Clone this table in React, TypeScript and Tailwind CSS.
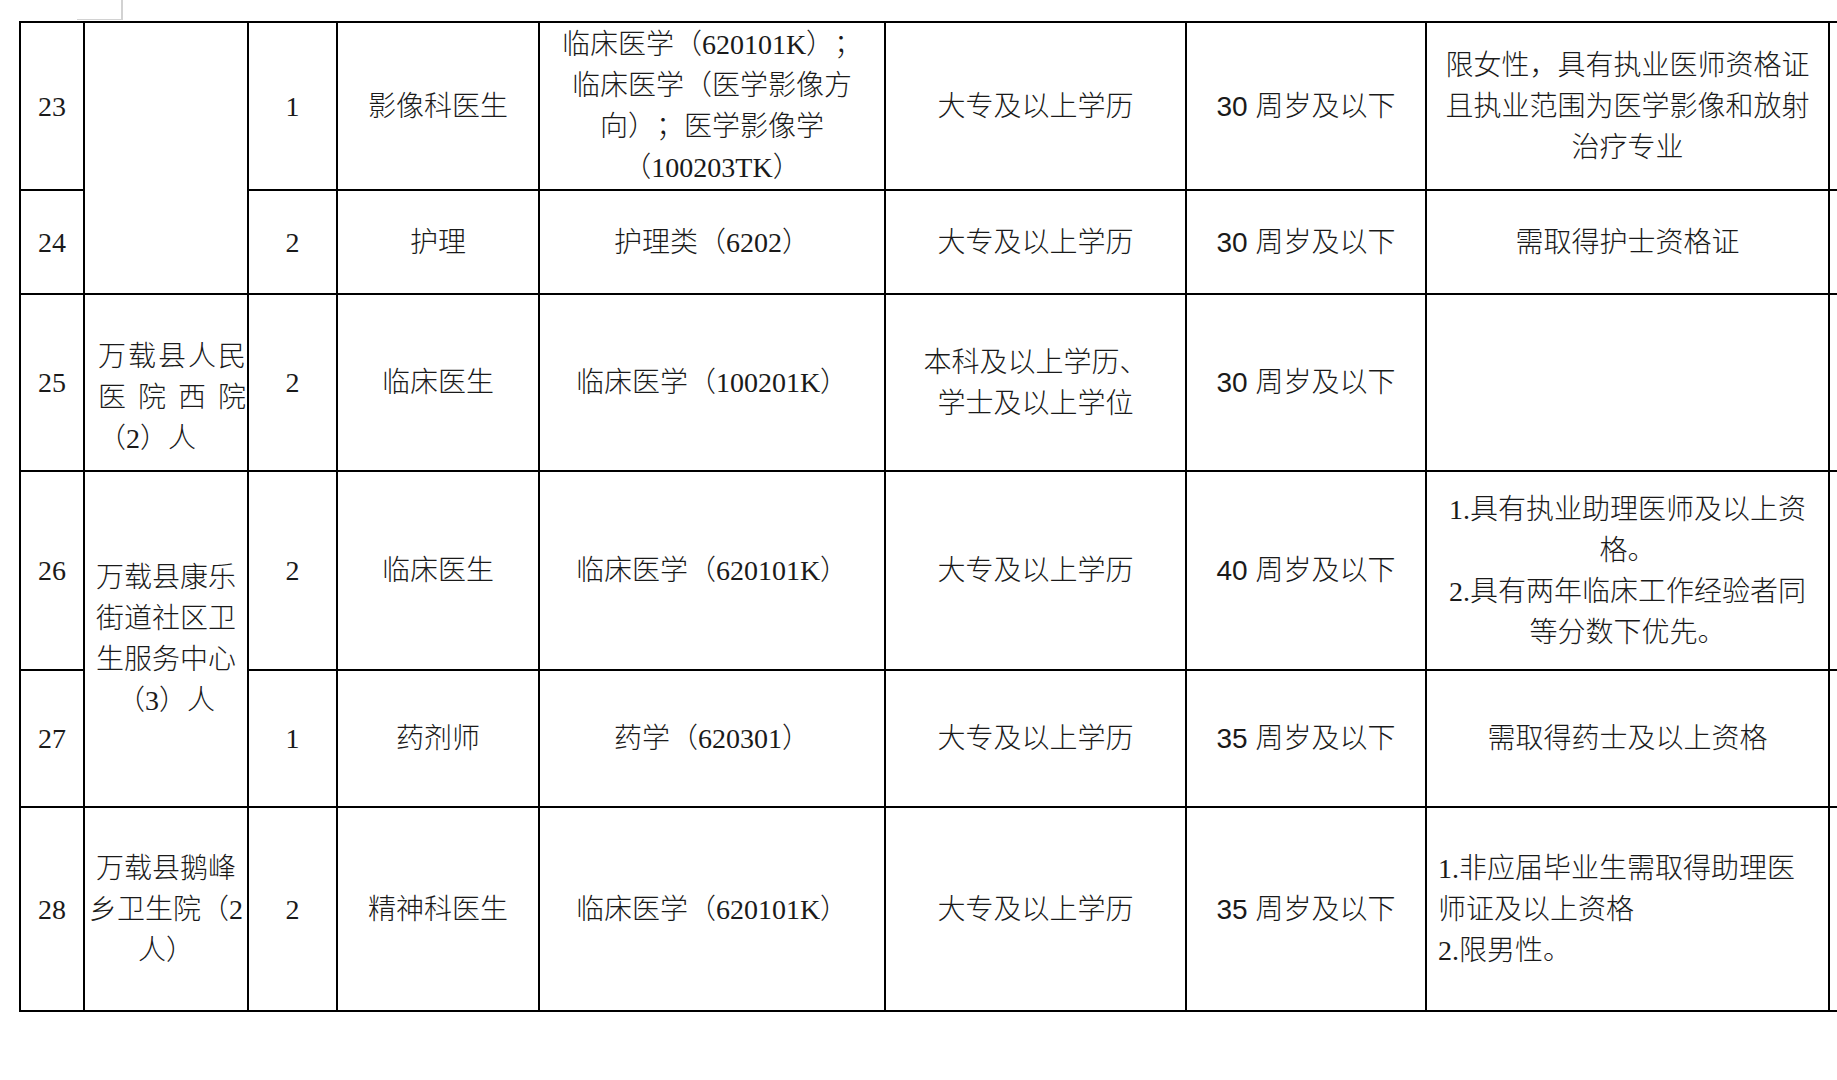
import React from "react";

const td = "border-2 border-black p-0 align-middle";

function Lines({ lines, left = false }: { lines: string[]; left?: boolean }) {
  return (
    <div className={left ? "text-left pl-[11px]" : "text-center"}>
      {lines.map((l, i) => (
        <div key={i} className="whitespace-nowrap">
          {l}
        </div>
      ))}
    </div>
  );
}

function Age({ text }: { text: string }) {
  return (
    <td className={td}>
      <div className="text-center whitespace-nowrap font-['Liberation_Sans','Noto_Sans_CJK_SC',sans-serif]">{text}</div>
    </td>
  );
}

function Spread({ text }: { text: string }) {
  return (
    <div className="flex w-[148px] justify-between">
      {text.split("").map((c, i) => (
        <span key={i}>{c}</span>
      ))}
    </div>
  );
}

export default function App() {
  return (
    <div className="w-[1837px] h-[1080px] overflow-hidden bg-white pl-[19px] text-[28px] font-light leading-[41px] text-[#1a1a1a] [text-spacing-trim:space-all] font-['Liberation_Serif','Noto_Sans_CJK_SC',serif]">
      {/* page corner mark */}
      <div className="ml-[58px] h-[20px] w-[46px] border-r-2 border-b border-[#d2d2d2]" />
      <table className="mt-[1px] table-fixed border-collapse w-[2109px]">
        <colgroup>
          <col className="w-[64px]" />
          <col className="w-[164px]" />
          <col className="w-[89px]" />
          <col className="w-[202px]" />
          <col className="w-[346px]" />
          <col className="w-[301px]" />
          <col className="w-[240px]" />
          <col className="w-[403px]" />
          <col className="w-[300px]" />
        </colgroup>
        <tbody>
          <tr className="h-[168px]">
            <td className={td}><Lines lines={["23"]} /></td>
            <td className={td} rowSpan={2}></td>
            <td className={td}><Lines lines={["1"]} /></td>
            <td className={td}><Lines lines={["影像科医生"]} /></td>
            <td className={td}>
              <Lines lines={["临床医学（620101K）；", "临床医学（医学影像方", "向）；医学影像学", "（100203TK）"]} />
            </td>
            <td className={td}><Lines lines={["大专及以上学历"]} /></td>
            <Age text="30 周岁及以下" />
            <td className={td}>
              <Lines lines={["限女性，具有执业医师资格证", "且执业范围为医学影像和放射", "治疗专业"]} />
            </td>
            <td className={td}></td>
          </tr>
          <tr className="h-[104px]">
            <td className={td}><Lines lines={["24"]} /></td>
            <td className={td}><Lines lines={["2"]} /></td>
            <td className={td}><Lines lines={["护理"]} /></td>
            <td className={td}><Lines lines={["护理类（6202）"]} /></td>
            <td className={td}><Lines lines={["大专及以上学历"]} /></td>
            <Age text="30 周岁及以下" />
            <td className={td}><Lines lines={["需取得护士资格证"]} /></td>
            <td className={td}></td>
          </tr>
          <tr className="h-[177px]">
            <td className={td}><Lines lines={["25"]} /></td>
            <td className={td}>
              <div className="pl-[13px] pt-[30px]">
                <Spread text="万载县人民" />
                <Spread text="医院西院" />
                <div className="whitespace-nowrap">（2）人</div>
              </div>
            </td>
            <td className={td}><Lines lines={["2"]} /></td>
            <td className={td}><Lines lines={["临床医生"]} /></td>
            <td className={td}><Lines lines={["临床医学（100201K）"]} /></td>
            <td className={td}><Lines lines={["本科及以上学历、", "学士及以上学位"]} /></td>
            <Age text="30 周岁及以下" />
            <td className={td}></td>
            <td className={td}></td>
          </tr>
          <tr className="h-[199px]">
            <td className={td}><Lines lines={["26"]} /></td>
            <td className={td} rowSpan={2}>
              <Lines lines={["万载县康乐", "街道社区卫", "生服务中心", "（3）人"]} />
            </td>
            <td className={td}><Lines lines={["2"]} /></td>
            <td className={td}><Lines lines={["临床医生"]} /></td>
            <td className={td}><Lines lines={["临床医学（620101K）"]} /></td>
            <td className={td}><Lines lines={["大专及以上学历"]} /></td>
            <Age text="40 周岁及以下" />
            <td className={td}>
              <Lines lines={["1.具有执业助理医师及以上资", "格。", "2.具有两年临床工作经验者同", "等分数下优先。"]} />
            </td>
            <td className={td}></td>
          </tr>
          <tr className="h-[137px]">
            <td className={td}><Lines lines={["27"]} /></td>
            <td className={td}><Lines lines={["1"]} /></td>
            <td className={td}><Lines lines={["药剂师"]} /></td>
            <td className={td}><Lines lines={["药学（620301）"]} /></td>
            <td className={td}><Lines lines={["大专及以上学历"]} /></td>
            <Age text="35 周岁及以下" />
            <td className={td}><Lines lines={["需取得药士及以上资格"]} /></td>
            <td className={td}></td>
          </tr>
          <tr className="h-[204px]">
            <td className={td}><Lines lines={["28"]} /></td>
            <td className={td}>
              <Lines lines={["万载县鹅峰", "乡卫生院（2", "人）"]} />
            </td>
            <td className={td}><Lines lines={["2"]} /></td>
            <td className={td}><Lines lines={["精神科医生"]} /></td>
            <td className={td}><Lines lines={["临床医学（620101K）"]} /></td>
            <td className={td}><Lines lines={["大专及以上学历"]} /></td>
            <Age text="35 周岁及以下" />
            <td className={td}>
              <Lines left lines={["1.非应届毕业生需取得助理医", "师证及以上资格", "2.限男性。"]} />
            </td>
            <td className={td}></td>
          </tr>
        </tbody>
      </table>
    </div>
  );
}
